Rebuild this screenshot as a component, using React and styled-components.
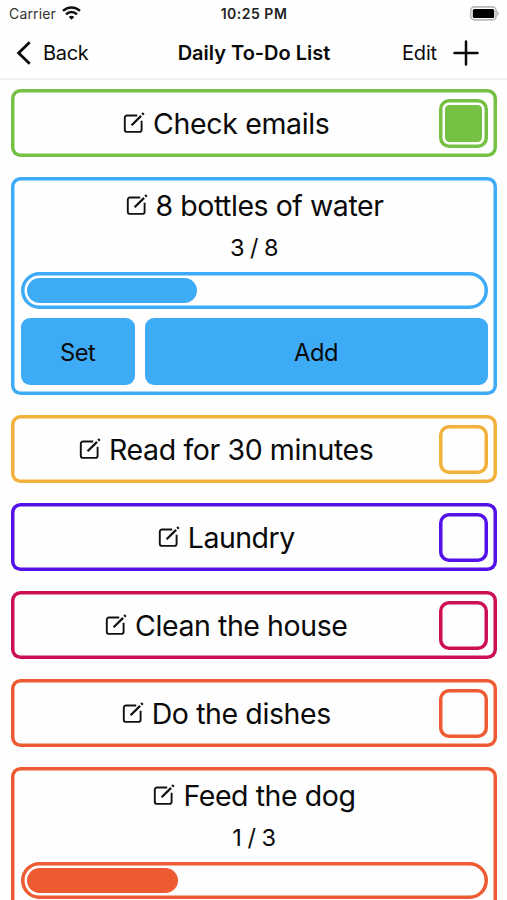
import React from 'react';
import styled, { createGlobalStyle } from 'styled-components';

const GlobalStyle = createGlobalStyle`
  * { box-sizing: border-box; }
  body { margin: 0; background: #fefefe; }
  button { font: inherit; color: inherit; border: 0; padding: 0; background: none; }
`;

const Screen = styled.div`
  height: 900px;
  overflow: hidden;
  display: flex;
  flex-direction: column;
  font-family: Inter, 'Liberation Sans', sans-serif;
  color: #0a0a0a;
`;

const StatusBar = styled.div`
  flex: none;
  height: 27px;
  display: grid;
  grid-template-columns: 1fr auto 1fr;
  align-items: center;
  padding: 0 8px 0 9px;
  font-size: 14px;
  line-height: 27px;
`;

const Carrier = styled.div`
  display: flex;
  align-items: center;
  gap: 6px;
  color: #333;
  letter-spacing: 0.15px;

  svg { margin-bottom: 2px; }
`;

const Clock = styled.div`
  font-weight: 600;
  letter-spacing: 0.5px;
  color: #222;
`;

const BatterySlot = styled.div`
  display: flex;
  justify-content: flex-end;
`;

const NavBar = styled.header`
  flex: none;
  height: 53px;
  display: grid;
  grid-template-columns: 1fr auto 1fr;
  align-items: center;
  padding: 0 28px 0 15px;
  border-bottom: 2px solid #f2f2f2;
  font-size: 20px;
`;

const BackButton = styled.button`
  display: flex;
  align-items: center;
  gap: 10px;
  letter-spacing: -0.3px;
`;

const NavTitle = styled.h1`
  margin: 0 0 0 14px;
  font-size: 20px;
  font-weight: 600;
`;

const NavActions = styled.div`
  display: flex;
  justify-content: flex-end;
  align-items: center;
  gap: 16px;
  letter-spacing: -0.15px;
`;

const List = styled.main`
  display: flex;
  flex-direction: column;
  gap: 20px;
  padding: 9px 10px 0 11px;
`;

const Card = styled.section`
  --tint: ${(p) => p.$tint};
  --outline: inset 0 0 0 3.5px var(--tint);
  flex: none;
  border-radius: 9.5px;
  box-shadow: var(--outline);
`;

const CheckCard = styled(Card)`
  height: 68px;
  display: grid;
  grid-template-columns: 1fr 49px;
  align-items: center;
  gap: 9px;
  padding: 0 9.5px 0 11px;
`;

const CounterCard = styled(Card)`
  height: ${(p) => (p.$withActions ? 218 : 144)}px;
  display: flex;
  flex-direction: column;
  padding: 8px 9.5px 0;
`;

const Title = styled.h2`
  margin: 0 0 0 1px;
  display: flex;
  justify-content: center;
  align-items: center;
  gap: 8px;
  height: 40px;
  font-size: 28.5px;
  font-weight: 400;
  letter-spacing: ${(p) => p.$tracking}px;
  white-space: nowrap;
`;

const Checkbox = styled.button`
  width: 49px;
  height: 49px;
  padding: 6px;
  border-radius: 10px;
  box-shadow: var(--outline);
`;

const CheckFill = styled.span`
  display: block;
  height: 100%;
  border-radius: 4.5px;
  background: var(--tint);
`;

const Count = styled.div`
  height: 47.3px;
  padding-top: 2px;
  font-size: 23.5px;
  line-height: 42px;
  letter-spacing: -0.5px;
  text-align: center;
`;

const Track = styled.div`
  flex: none;
  height: 36.700px;
  padding: 6.200px;
  border-radius: 18.400px;
  box-shadow: var(--outline);
`;

const Fill = styled.div`
  height: 100%;
  border-radius: 12.500px;
  background: var(--tint);
`;

const Buttons = styled.div`
  display: grid;
  grid-template-columns: 114.500px 1fr;
  gap: 9.500px;
  margin-top: 9.500px;
`;

const Action = styled.button`
  height: 67px;
  padding-top: 1px;
  border-radius: 9px;
  background: var(--tint);
  font-size: 23.700px;
  letter-spacing: -0.500px;
`;

const EditIcon = () => (
  <svg width="22" height="22" viewBox="0 0 22 22" fill="none" stroke="#111" strokeWidth="1.900">
    <path d="M14.200 3.500H4a2.200 2.200 0 0 0-2.200 2.200v12a2.200 2.200 0 0 0 2.200 2.200h12.400a2.200 2.200 0 0 0 2.200-2.200V8.700" />
    <path d="M8.600 13.300 18.100 3.900" strokeWidth="2.200" />
    <path d="M19.200 2.700 20.700 1.200" strokeWidth="2.500" />
  </svg>
);

const WifiIcon = () => (
  <svg width="19" height="14" viewBox="0 0 19 14" fill="none" stroke="#111" strokeWidth="2.500">
    <path d="M1 4.900a12.200 12.200 0 0 1 17 0" />
    <path d="M4 8.300a7.800 7.800 0 0 1 11 0" />
    <path d="M9.500 13.800 6.700 11a4 4 0 0 1 5.600 0Z" fill="#111" stroke="none" />
  </svg>
);

const BatteryIcon = () => (
  <svg width="30" height="15" viewBox="0 0 30 15">
    <rect x="1.700" y="0.900" width="25.400" height="13" rx="3.800" fill="#fff" stroke="#b8b8b8" strokeWidth="1.600" />
    <rect x="3.800" y="3" width="21.400" height="9" rx="1.500" fill="#000" />
    <path d="M28.300 5v5c1-.4 1.500-1.400 1.500-2.500S29.300 5.400 28.300 5Z" fill="#b8b8b8" />
  </svg>
);

const BackIcon = () => (
  <svg width="18" height="24" viewBox="0 0 18 24" fill="none" stroke="#0a0a0a" strokeWidth="2.800">
    <path d="M14.700 1.300 3.600 12l11.100 10.700" />
  </svg>
);

const PlusIcon = () => (
  <svg width="26" height="26" viewBox="0 0 26 26" stroke="#0a0a0a" strokeWidth="2.500" strokeLinecap="round">
    <path d="M13 1.500v23M1.500 13h23" />
  </svg>
);

const tasks = [
  { name: 'Check emails', tint: '#76c143', tracking: -0.34, done: true },
  { name: '8 bottles of water', tint: '#3eabf7', tracking: -0.46, count: 3, goal: 8, filled: 37.5, actions: ['Set', 'Add'] },
  { name: 'Read for 30 minutes', tint: '#f2b13b', tracking: -0.38 },
  { name: 'Laundry', tint: '#5410e8', tracking: -0.5 },
  { name: 'Clean the house', tint: '#cd0f55', tracking: -0.42 },
  { name: 'Do the dishes', tint: '#ee5a32', tracking: -0.4 },
  { name: 'Feed the dog', tint: '#ee5a32', tracking: -0.42, count: 1, goal: 3, filled: 33.3 },
];

const TaskTitle = ({ task }) => (
  <Title $tracking={task.tracking}>
    <EditIcon />
    <span>{task.name}</span>
  </Title>
);

const Task = ({ task }) =>
  task.goal ? (
    <CounterCard $tint={task.tint} $withActions>
      <TaskTitle task={task} />
      <Count>{task.count} / {task.goal}</Count>
      <Track>
        <Fill style={{ width: `${task.filled}%` }} />
      </Track>
      {task.actions && (
        <Buttons>
          {task.actions.map((label) => <Action key={label}>{label}</Action>)}
        </Buttons>
      )}
    </CounterCard>
  ) : (
    <CheckCard $tint={task.tint}>
      <TaskTitle task={task} />
      <Checkbox aria-label={task.name}>{task.done && <CheckFill />}</Checkbox>
    </CheckCard>
  );

export default function App() {
  return (
    <Screen>
      <GlobalStyle />
      <StatusBar>
        <Carrier>Carrier <WifiIcon /></Carrier>
        <Clock>10:25 PM</Clock>
        <BatterySlot><BatteryIcon /></BatterySlot>
      </StatusBar>
      <NavBar>
        <BackButton><BackIcon />Back</BackButton>
        <NavTitle>Daily To-Do List</NavTitle>
        <NavActions><span>Edit</span><PlusIcon /></NavActions>
      </NavBar>
      <List>
        {tasks.map((task) => <Task key={task.name} task={task} />)}
      </List>
    </Screen>
  );
}
